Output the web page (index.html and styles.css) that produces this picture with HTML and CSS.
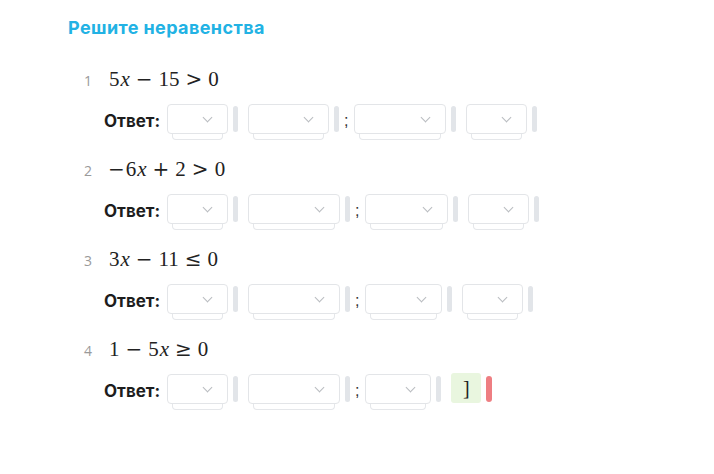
FILE: index.html
```html
<!DOCTYPE html>
<html lang="ru">
<head>
<meta charset="utf-8">
<link rel="stylesheet" href="styles.css">
</head>
<body>
<div class="page">
  <h1 class="title">Решите неравенства</h1>

  <div class="task">
    <div class="eqline"><span class="num">1</span><span class="math">5<i>x</i><span class="op">−</span>15<span class="op">&gt;</span>0</span></div>
    <div class="answer">
      <span class="label">Ответ:</span>
      <div class="dd" style="width:61px"><div class="box"></div><div class="tab"></div></div><span class="bar"></span>
      <div class="dd" style="width:81px"><div class="box"></div><div class="tab"></div></div><span class="bar bar-s"></span><span class="semi">;</span>
      <div class="dd" style="width:92px"><div class="box"></div><div class="tab"></div></div><span class="bar"></span>
      <div class="dd" style="width:61px"><div class="box"></div><div class="tab"></div></div><span class="bar"></span>
    </div>
  </div>

  <div class="task">
    <div class="eqline"><span class="num">2</span><span class="math"><span class="op op-u">−</span>6<i>x</i><span class="op">+</span>2<span class="op">&gt;</span>0</span></div>
    <div class="answer">
      <span class="label">Ответ:</span>
      <div class="dd" style="width:61px"><div class="box"></div><div class="tab"></div></div><span class="bar"></span>
      <div class="dd" style="width:92px"><div class="box"></div><div class="tab"></div></div><span class="bar bar-s"></span><span class="semi">;</span>
      <div class="dd" style="width:83px"><div class="box"></div><div class="tab"></div></div><span class="bar"></span>
      <div class="dd" style="width:61px"><div class="box"></div><div class="tab"></div></div><span class="bar"></span>
    </div>
  </div>

  <div class="task">
    <div class="eqline"><span class="num">3</span><span class="math">3<i>x</i><span class="op">−</span>11<span class="op">≤</span>0</span></div>
    <div class="answer">
      <span class="label">Ответ:</span>
      <div class="dd" style="width:61px"><div class="box"></div><div class="tab"></div></div><span class="bar"></span>
      <div class="dd" style="width:92px"><div class="box"></div><div class="tab"></div></div><span class="bar bar-s"></span><span class="semi">;</span>
      <div class="dd" style="width:77px"><div class="box"></div><div class="tab"></div></div><span class="bar"></span>
      <div class="dd" style="width:61px"><div class="box"></div><div class="tab"></div></div><span class="bar"></span>
    </div>
  </div>

  <div class="task">
    <div class="eqline"><span class="num">4</span><span class="math">1<span class="op">−</span>5<i>x</i><span class="op">≥</span>0</span></div>
    <div class="answer">
      <span class="label">Ответ:</span>
      <div class="dd" style="width:61px"><div class="box"></div><div class="tab"></div></div><span class="bar"></span>
      <div class="dd" style="width:92px"><div class="box"></div><div class="tab"></div></div><span class="bar bar-s"></span><span class="semi">;</span>
      <div class="dd" style="width:66px"><div class="box"></div><div class="tab"></div></div><span class="bar"></span>
      <div class="chosen">]</div><span class="bar bar-red"></span>
    </div>
  </div>
</div>
</body>
</html>
```

FILE: styles.css
```css
html, body {
  margin: 0;
  padding: 0;
  background: #ffffff;
}

.page {
  padding: 15px 0 0 68px;
  font-family: "Inter", "Liberation Sans", sans-serif;
}

.title {
  margin: 0;
  font-size: 18px;
  line-height: 26px;
  font-weight: 700;
  color: #22b2e4;
  letter-spacing: 0.4px;
}

.task {
  padding-left: 16px;
}

.title + .task {
  margin-top: 25px;
}

.task + .task {
  margin-top: 14px;
}

.eqline {
  display: flex;
  align-items: center;
  height: 26px;
}

.num {
  width: 25px;
  font-size: 14px;
  color: #9a9a9a;
  font-family: "Open Sans", "Liberation Sans", sans-serif;
  padding-top: 2px;
}

.math {
  font-family: "Liberation Serif", "DejaVu Serif", serif;
  font-size: 21px;
  color: #222;
  display: flex;
  align-items: baseline;
}

.math i {
  font-style: italic;
  margin-left: 1px;
}

.op {
  font-family: "DejaVu Serif", serif;
  font-size: 20px;
  margin: 0 6px;
}

.op-u {
  margin: 0 1px 0 -1px;
}

.answer {
  display: flex;
  align-items: flex-start;
  margin-left: 20px;
  margin-top: 12px;
  height: 38px;
}

.label {
  font-family: "Inter", "Liberation Sans", Arial, sans-serif;
  font-weight: 700;
  font-size: 17px;
  color: #1d1d1d;
  line-height: 30px;
  width: 57px;
  margin-right: 6px;
  padding-top: 2px;
  white-space: nowrap;
}

.dd {
  display: flex;
  flex-direction: column;
}

.box {
  height: 30px;
  box-sizing: border-box;
  border: 1px solid #e3e5e8;
  border-radius: 4px;
  background: #fff;
  display: flex;
  align-items: center;
  justify-content: flex-end;
  padding-right: 16px;
}

.box::after {
  content: "";
  width: 6px;
  height: 6px;
  margin-top: -4px;
  border-right: 1.5px solid #b9bcc0;
  border-bottom: 1.5px solid #b9bcc0;
  transform: rotate(45deg);
}

.tab {
  height: 6px;
  margin: 0 5px;
  box-sizing: border-box;
  border: 1px solid #e5e7ea;
  border-top: none;
  border-radius: 0 0 4px 4px;
}

.bar {
  width: 5px;
  height: 26px;
  margin: 2px 10px 0 5px;
  border-radius: 3px;
  background: #e2e5e9;
}

.bar-s {
  margin-right: 5px;
}

.bar-red {
  width: 6px;
  background: #ee7e82;
}

.semi {
  font-family: "Liberation Sans", Arial, sans-serif;
  font-size: 16px;
  line-height: 30px;
  color: #333;
  margin-right: 6px;
  padding-top: 2px;
}

.chosen {
  width: 30px;
  height: 30px;
  margin-top: -1px;
  border-radius: 3px;
  background: #e9f6df;
  font-family: "Liberation Serif", serif;
  font-size: 20px;
  line-height: 30px;
  text-align: center;
  color: #222;
}
```
